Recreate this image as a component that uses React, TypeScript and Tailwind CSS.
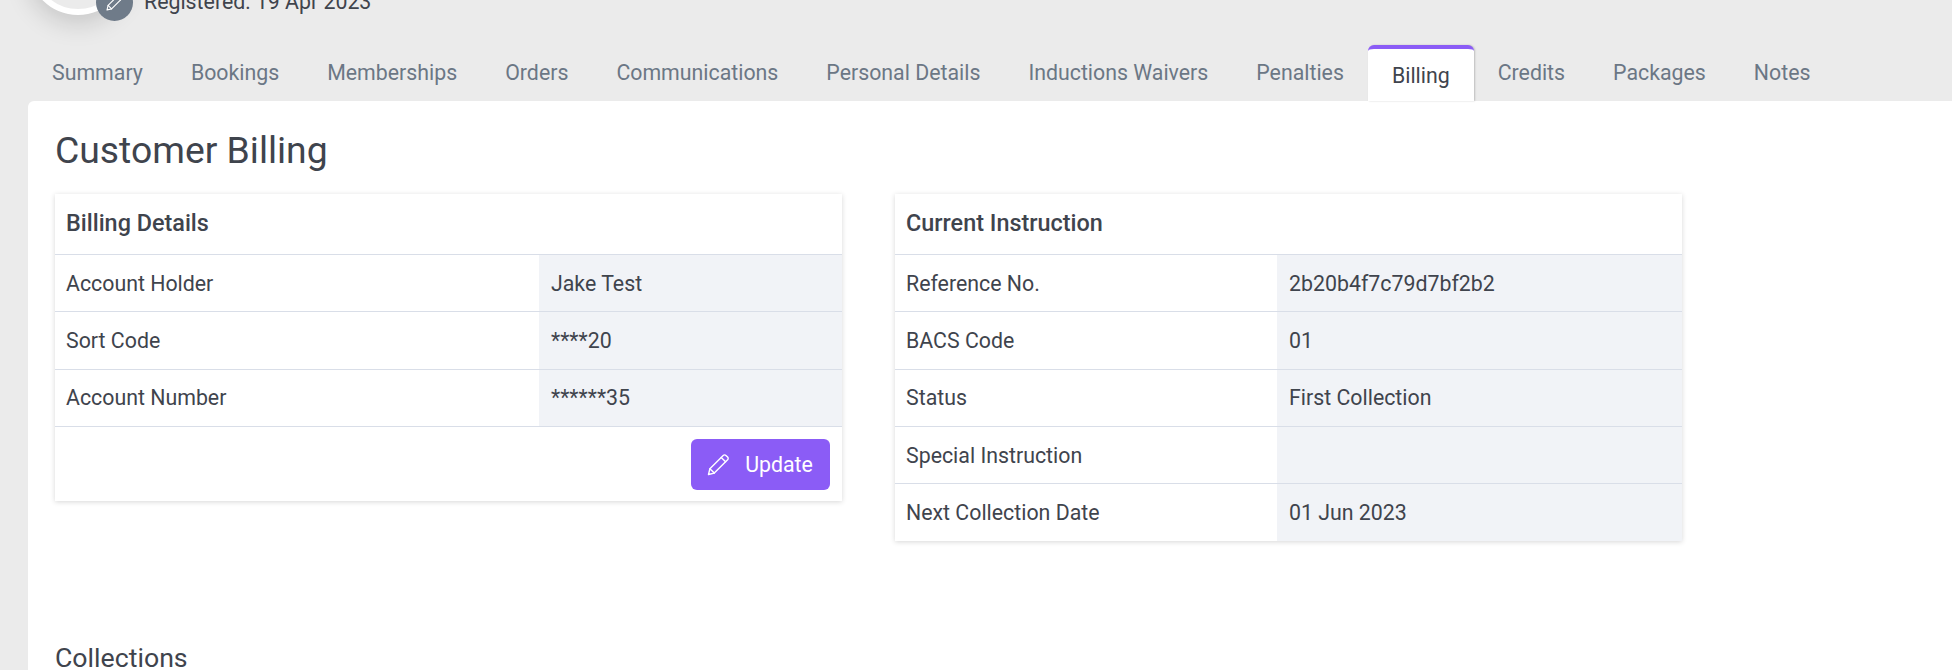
import React from "react";

const tabs = ["Summary","Bookings","Memberships","Orders","Communications","Personal Details","Inductions Waivers","Penalties","Billing","Credits","Packages","Notes"];

function Pencil({ className }: { className?: string }) {
  return (
    <svg viewBox="0 0 24 24" fill="none" stroke="currentColor" strokeWidth="1.4" strokeLinejoin="round" strokeLinecap="round" className={className}>
      <path d="M2.5 21.5l1.4-5.8L17.2 2.4a1.9 1.9 0 0 1 2.7 0l1.7 1.7a1.9 1.9 0 0 1 0 2.7L8.3 20.1 2.5 21.5z" />
      <path d="M15.2 4.4l4.4 4.4M3.9 15.7l4.4 4.4" />
    </svg>
  );
}

function Row({ label, value, labelW }: { label: string; value: string; labelW: string }) {
  return (
    <div className="flex h-[57.33px] border-t border-[#d9dee8]">
      <div className={`${labelW} shrink-0 flex items-center pl-[11px] pt-[1px]`}>{label}</div>
      <div className="flex-1 flex items-center pl-3 pt-[1px] bg-[#f1f3f7]">{value}</div>
    </div>
  );
}

function Card({ title, rows, labelW, children }: { title: string; rows: [string, string][]; labelW: string; children?: React.ReactNode }) {
  return (
    <div className="w-[787px] self-start bg-white shadow-[0_1px_5px_rgba(0,0,0,0.16)] text-[21.33px] text-[#3f444d]">
      <div className="h-[60px] flex items-center pl-[11px] font-medium text-[23.4px]">{title}</div>
      {rows.map(([l, v]) => <Row key={l} label={l} value={v} labelW={labelW} />)}
      {children}
    </div>
  );
}

export default function App() {
  return (
    <div className="w-[1952px] h-[670px] overflow-hidden bg-[#ebebeb] font-['Roboto',sans-serif]">
      <div className="h-[45px] flex items-start pl-[28px]">
        <div className="relative w-[108px] h-[15px]">
          <div className="absolute left-0 bottom-0 w-[100px] h-[100px] rounded-full border-[6px] border-white bg-[#ebebeb] shadow-[0_8px_26px_rgba(0,0,0,0.16)]" />
          <div className="absolute left-[68px] top-[-16px] w-[37px] h-[37px] rounded-full bg-[#6f7b89] flex items-center justify-center text-white">
            <Pencil className="w-[19px] h-[19px]" />
          </div>
        </div>
        <div className="ml-[8px] -mt-[10px] text-[21.33px] leading-[24px] text-[#3f444d]">Registered: 19 Apr 2023</div>
      </div>
      <div className="h-[56px] flex items-start pl-[28px]">
        {tabs.map(t => t === "Billing" ? (
          <div key={t} className="h-[56px] px-[24px] pt-[1px] bg-white border-t-[4px] border-[#8b5cf6] rounded-t-[6px] shadow-[1px_0_2px_rgba(0,0,0,0.2)] flex items-center text-[21.32px] text-[#3f444d]">{t}</div>
        ) : (
          <div key={t} className="h-[56px] px-[24px] flex items-center text-[21.32px] text-[#6b7785]">{t}</div>
        ))}
      </div>
      <div className="ml-[28px] h-[569px] bg-white rounded-tl-[6px] pl-[27px] pt-[27px]">
        <h1 className="text-[37.3px] leading-[44px] text-[#3f444d]">Customer Billing</h1>
        <div className="mt-[22px] flex gap-[53px] h-[347px]">
          <Card
            title="Billing Details"
            labelW="w-[484px]"
            rows={[["Account Holder","Jake Test"],["Sort Code","****20"],["Account Number","******35"]]}
          >
            <div className="h-[75px] border-t border-[#d9dee8] pt-[1px] flex items-center justify-end pr-[12px]">
              <button className="h-[51px] w-[139px] pt-[1px] pr-[2px] rounded-[6px] bg-[#8b5cf6] text-white flex items-center justify-center gap-[15px] text-[21.33px]">
                <Pencil className="w-[24px] h-[24px]" />
                Update
              </button>
            </div>
          </Card>
          <Card
            title="Current Instruction"
            labelW="w-[382px]"
            rows={[["Reference No.","2b20b4f7c79d7bf2b2"],["BACS Code","01"],["Status","First Collection"],["Special Instruction",""],["Next Collection Date","01 Jun 2023"]]}
          />
        </div>
        <h2 className="mt-[101px] text-[26.7px] leading-[32px] text-[#3f444d]">Collections</h2>
      </div>
    </div>
  );
}
